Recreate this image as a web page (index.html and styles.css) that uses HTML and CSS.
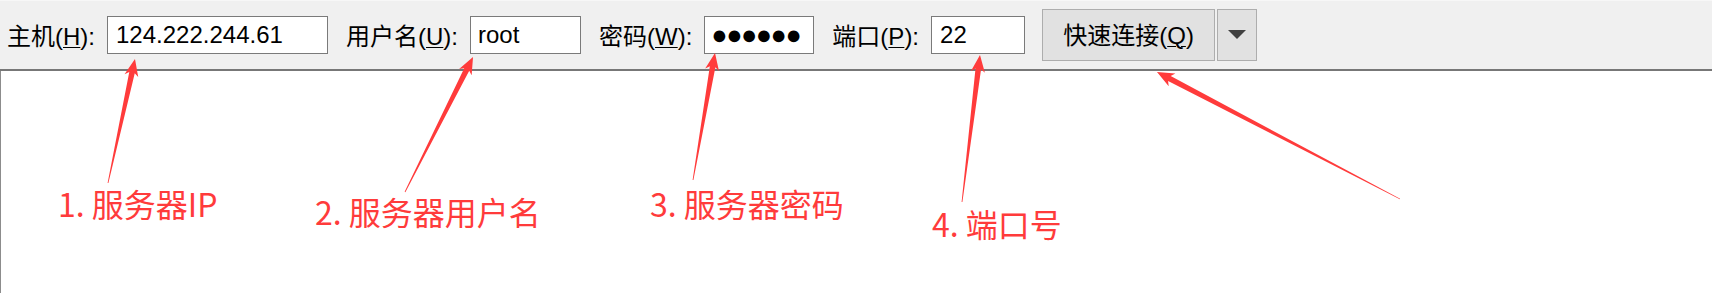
FILE: index.html
```html
<!DOCTYPE html>
<html lang="zh-CN">
<head>
<meta charset="utf-8">
<title>快速连接</title>
<link rel="stylesheet" href="styles.css">
</head>
<body>
<div class="toolbar">
  <span class="lbl">主机(<u>H</u>):</span>
  <div class="field f-host">124.222.244.61</div>
  <span class="lbl">用户名(<u>U</u>):</span>
  <div class="field f-user">root</div>
  <span class="lbl">密码(<u>W</u>):</span>
  <div class="field f-pass"><span class="dots">●●●●●●</span></div>
  <span class="lbl">端口(<u>P</u>):</span>
  <div class="field f-port">22</div>
  <div class="btn btn-connect">快速连接(<u>Q</u>)</div>
  <div class="btn btn-drop">
    <svg class="tri" width="20" height="10" viewBox="0 0 20 10"><polygon points="1,0 19,0 10,9" fill="#404040"/></svg>
  </div>
</div>
<div class="main"></div>

<svg class="arrows" width="1712" height="293" viewBox="0 0 1712 293">
  <g fill="#ff3b3b">
    <polygon transform="translate(108,183) rotate(-77.72)" points="0,-0.4 112.9,-2.8 109.9,-7 126.9,0 109.9,7 112.9,2.8 0,0.4"/>
    <polygon transform="translate(405,192) rotate(-63.26)" points="0,-0.4 137.2,-2.8 134.2,-7 151.2,0 134.2,7 137.2,2.8 0,0.4"/>
    <polygon transform="translate(693,180) rotate(-80.17)" points="0,-0.4 114.9,-2.8 111.9,-7 128.9,0 111.9,7 114.9,2.8 0,0.4"/>
    <polygon transform="translate(962,202) rotate(-83.02)" points="0,-0.4 134.1,-2.8 131.1,-7 148.1,0 131.1,7 134.1,2.8 0,0.4"/>
    <polygon transform="translate(1400,199) rotate(-152.41)" points="0,-0.3 260.2,-2.8 257.2,-7.2 274.2,0 257.2,7.2 260.2,2.8 0,0.3"/>
  </g>
</svg>

<div class="note n1">1. 服务器IP</div>
<div class="note n2">2. 服务器用户名</div>
<div class="note n3">3. 服务器密码</div>
<div class="note n4">4. 端口号</div>
</body>
</html>
```

FILE: styles.css
```css
html, body {
  margin: 0;
  padding: 0;
  background: #ffffff;
}

body {
  width: 1712px;
  height: 293px;
  overflow: hidden;
  font-family: "Liberation Sans", "Noto Sans CJK SC", sans-serif;
  color: #000000;
}

.toolbar {
  box-sizing: border-box;
  height: 71px;
  background: #f0f0f0;
  border-top: 1px solid #f7f7f7;
  border-bottom: 2px solid #777777;
  display: flex;
  align-items: center;
  padding-left: 7px;
  font-size: 24px;
}

.lbl {
  white-space: nowrap;
  margin-right: 12px;
  line-height: 1;
  padding-top: 3px;
}

.lbl u,
.btn u {
  text-decoration-thickness: 1px;
  text-underline-offset: 2px;
}

.field {
  box-sizing: border-box;
  height: 38px;
  background: #ffffff;
  border: 1px solid #7a7a7a;
  display: flex;
  align-items: center;
  padding: 0 0 0 8px;
  margin-right: 18px;
  line-height: 1;
  white-space: nowrap;
  overflow: hidden;
}

.f-host { width: 221px; }
.f-user { width: 111px; padding-left: 7px; }
.f-pass { width: 110px; padding-left: 6px; }
.f-port { width: 94px; margin-right: 17px; }

.dots {
  font-size: 27px;
  letter-spacing: -1.5px;
}

.btn {
  box-sizing: border-box;
  height: 52px;
  background: #e1e1e1;
  border: 1px solid #adadad;
  display: flex;
  align-items: center;
  justify-content: center;
  line-height: 1;
}

.btn-connect {
  width: 173px;
  margin-right: 2px;
  padding-top: 2px;
}

.btn-drop {
  width: 40px;
}

.tri {
  display: block;
}

.main {
  box-sizing: border-box;
  height: 222px;
  background: #ffffff;
  border-left: 1px solid #8c8c8c;
}

.arrows {
  position: absolute;
  left: 0;
  top: 0;
  pointer-events: none;
}

.note {
  position: absolute;
  font-family: "Noto Sans CJK SC", sans-serif;
  font-size: 32px;
  line-height: 32px;
  color: #ff3b3b;
  white-space: nowrap;
}

.n1 { left: 58px; top: 187px; }
.n2 { left: 315px; top: 195px; }
.n3 { left: 650px; top: 187px; }
.n4 { left: 932px; top: 207px; }
```
